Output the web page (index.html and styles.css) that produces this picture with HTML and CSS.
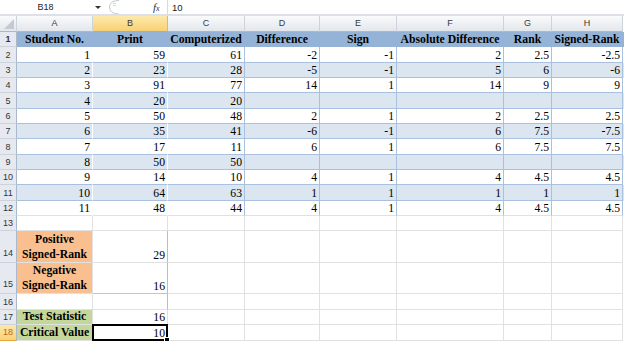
FILE: index.html
```html
<!DOCTYPE html>
<html lang="en">
<head>
    <meta charset="UTF-8">
    <meta name="viewport" content="width=device-width, initial-scale=1.0">
    <title>Signed-Rank Test</title>
    <link rel="stylesheet" href="styles.css">
</head>
<body>
    <div class="fbar">
        <div class="namebox">B18</div>
        <div class="drop"></div>
        <svg class="pill" width="14" height="14" viewBox="0 0 14 14">
            <path d="M13 0.5 Q3.5 0.5 3.5 7 Q3.5 14 13 14" fill="none" stroke="#c3c8cf"/>
            <path d="M7 3.5 H10 M7 5.5 H10" stroke="#d5d9de"/>
        </svg>
        <div class="fx"><i>f</i><span>x</span></div>
        <div class="fline"></div>
        <div class="fval">10</div>
    </div>
    <div class="gap"></div>

    <div class="sheet">
        <div class="row colhead">
            <div class="corner"><svg width="10" height="10"><polygon points="10,0 10,10 0,10" fill="#c4cad3"/></svg></div>
            <div>A</div>
            <div class="sel">B</div>
            <div>C</div>
            <div>D</div>
            <div>E</div>
            <div>F</div>
            <div>G</div>
            <div>H</div>
        </div>

        <div class="row thead">
            <div class="rh">1</div>
            <div>Student No.</div>
            <div>Print</div>
            <div>Computerized</div>
            <div>Difference</div>
            <div>Sign</div>
            <div>Absolute Difference</div>
            <div>Rank</div>
            <div>Signed-Rank</div>
        </div>
        <div class="row trow">
            <div class="rh">2</div>
            <div>1</div><div>59</div><div>61</div><div>-2</div><div>-1</div><div>2</div><div>2.5</div><div>-2.5</div>
        </div>
        <div class="row trow alt">
            <div class="rh">3</div>
            <div>2</div><div>23</div><div>28</div><div>-5</div><div>-1</div><div>5</div><div>6</div><div>-6</div>
        </div>
        <div class="row trow">
            <div class="rh">4</div>
            <div>3</div><div>91</div><div>77</div><div>14</div><div>1</div><div>14</div><div>9</div><div>9</div>
        </div>
        <div class="row trow alt">
            <div class="rh">5</div>
            <div>4</div><div>20</div><div>20</div><div></div><div></div><div></div><div></div><div></div>
        </div>
        <div class="row trow">
            <div class="rh">6</div>
            <div>5</div><div>50</div><div>48</div><div>2</div><div>1</div><div>2</div><div>2.5</div><div>2.5</div>
        </div>
        <div class="row trow alt">
            <div class="rh">7</div>
            <div>6</div><div>35</div><div>41</div><div>-6</div><div>-1</div><div>6</div><div>7.5</div><div>-7.5</div>
        </div>
        <div class="row trow">
            <div class="rh">8</div>
            <div>7</div><div>17</div><div>11</div><div>6</div><div>1</div><div>6</div><div>7.5</div><div>7.5</div>
        </div>
        <div class="row trow alt">
            <div class="rh">9</div>
            <div>8</div><div>50</div><div>50</div><div></div><div></div><div></div><div></div><div></div>
        </div>
        <div class="row trow">
            <div class="rh">10</div>
            <div>9</div><div>14</div><div>10</div><div>4</div><div>1</div><div>4</div><div>4.5</div><div>4.5</div>
        </div>
        <div class="row trow alt">
            <div class="rh">11</div>
            <div>10</div><div>64</div><div>63</div><div>1</div><div>1</div><div>1</div><div>1</div><div>1</div>
        </div>
        <div class="row trow last">
            <div class="rh">12</div>
            <div>11</div><div>48</div><div>44</div><div>4</div><div>1</div><div>4</div><div>4.5</div><div>4.5</div>
        </div>

        <div class="row">
            <div class="rh">13</div>
            <div></div><div></div><div></div><div></div><div></div><div></div><div></div><div></div>
        </div>
        <div class="row tall">
            <div class="rh">14</div>
            <div class="lab orange">Positive<br>Signed-Rank</div>
            <div class="edge">29</div>
            <div></div><div></div><div></div><div></div><div></div><div></div>
        </div>
        <div class="row tall">
            <div class="rh">15</div>
            <div class="lab orange">Negative<br>Signed-Rank</div>
            <div class="edge base">16</div>
            <div></div><div></div><div></div><div></div><div></div><div></div>
        </div>
        <div class="row">
            <div class="rh">16</div>
            <div></div>
            <div class="edge"></div>
            <div></div><div></div><div></div><div></div><div></div><div></div>
        </div>
        <div class="row">
            <div class="rh">17</div>
            <div class="lab green">Test Statistic</div>
            <div>16</div>
            <div></div><div></div><div></div><div></div><div></div><div></div>
        </div>
        <div class="row">
            <div class="rh sel">18</div>
            <div class="lab green">Critical Value</div>
            <div class="active">10</div>
            <div></div><div></div><div></div><div></div><div></div><div></div>
        </div>
    </div>
</body>
</html>
```

FILE: styles.css
```css
body {
    margin: 0;
    background-color: #fff;
    font-family: "Liberation Serif", "Times New Roman", serif;
    overflow: hidden;
}

/* formula bar */
.fbar {
    display: flex;
    align-items: center;
    height: 14px;
    font-family: "Liberation Sans", Arial, sans-serif;
    font-size: 9px;
    color: #222;
}

.namebox {
    width: 91px;
    text-align: center;
}

.drop {
    width: 14px;
    display: flex;
    justify-content: center;
}

.drop::before {
    content: "";
    border-left: 3px solid transparent;
    border-right: 3px solid transparent;
    border-top: 3px solid #333;
}

.pill {
    margin-left: 1px;
}

.fx {
    margin-left: 33px;
    width: 12px;
    font-family: "Liberation Serif", serif;
    font-size: 11px;
    color: #333;
}

.fx span {
    font-size: 8px;
    font-style: italic;
}

.fline {
    margin-left: 2px;
    width: 1px;
    align-self: stretch;
    background-color: #d6dae0;
}

.fval {
    margin-left: 4px;
    font-size: 9.5px;
}

.gap {
    height: 2px;
    background-color: #dde1e7;
}

/* grid */
.row {
    display: grid;
    grid-template-columns: 17px 76px 75px 77px 75px 77px 107px 48px 71px;
    height: 15.35px;
}

.row > div {
    box-sizing: border-box;
    border-right: 1px solid #e1e1e1;
    border-bottom: 1px solid #e1e1e1;
    display: flex;
    align-items: flex-end;
    justify-content: flex-end;
    padding: 0 2px;
    line-height: 13px;
    font-size: 11.7px;
    white-space: nowrap;
    overflow: hidden;
}

.tall {
    height: 31.5px;
}

.colhead {
    height: 16px;
}

.colhead > div {
    background: linear-gradient(#f9fafb, #e3e7ec);
    border-right-color: #cdd3db;
    border-bottom-color: #a9b8ca;
    align-items: center;
    justify-content: center;
    padding: 0;
    font-family: "Liberation Sans", Arial, sans-serif;
    font-size: 9px;
    color: #3a3a3a;
}

.colhead .corner {
    align-items: flex-end;
    justify-content: flex-end;
    padding: 0 2px 2px 0;
}

.colhead .sel {
    background: linear-gradient(#fde9aa, #f8d176);
    border-right-color: #efb64a;
    border-bottom-color: #e4a53a;
}

.row .rh {
    background-color: #e6eaf0;
    border-right-color: #a9b8ca;
    border-bottom-color: #cdd3db;
    align-items: center;
    justify-content: center;
    padding: 1px 0 0;
    font-family: "Liberation Sans", Arial, sans-serif;
    font-size: 9px;
    color: #333;
}

.tall .rh {
    align-items: flex-end;
    padding-bottom: 2px;
}

.row .rh.sel {
    background: linear-gradient(#fde9aa, #f8d176);
    border-bottom-color: #e4a53a;
    color: #c0661a;
}

/* table */
.thead {
    background-color: #95b3d7;
}

.thead > div {
    border-color: #95b3d7;
    justify-content: center;
    font-weight: bold;
}

.trow > div {
    border-bottom-color: #a9c0de;
    border-right-color: #a9c0de;
}

.trow > div:nth-child(2),
.trow > div:nth-child(3) {
    border-right-color: #fff;
}

.trow.last > div {
    border-bottom-color: #e1e1e1;
}

.alt {
    background-color: #dce6f1;
}

/* summary */
.row .lab {
    justify-content: center;
    text-align: center;
    font-weight: bold;
    line-height: 15px;
    padding: 0;
}

.orange {
    background-color: #fabf8f;
    border-right-color: #eee;
    border-bottom-color: #f1e4da;
}

.green {
    background-color: #c4d79b;
}

.row .edge {
    border-right-color: #a9c0de;
}

.row .base {
    border-bottom-color: #b7c6d8;
}

.row .active {
    position: relative;
    overflow: visible;
}

.active::after {
    content: "";
    position: absolute;
    left: -1px;
    top: -1px;
    right: -1px;
    bottom: -1px;
    border: 2px solid #000;
}

.active::before {
    content: "";
    position: absolute;
    right: -3px;
    bottom: -3px;
    width: 4px;
    height: 4px;
    background-color: #000;
    border: 1px solid #fff;
    z-index: 1;
}
```
